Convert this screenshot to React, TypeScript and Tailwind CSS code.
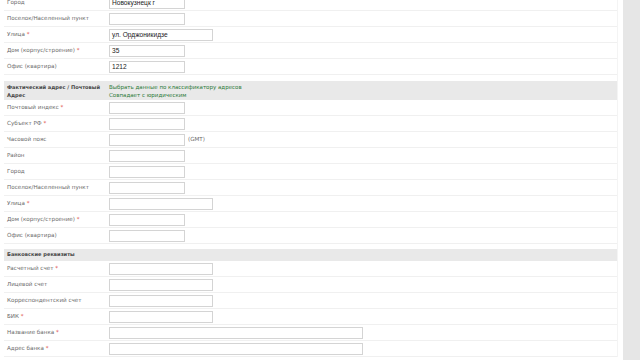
import React from "react";

type Row = { label: string; req?: boolean; w?: "s" | "m" | "l"; value?: string; suffix?: string };

const sec1: Row[] = [
  { label: "Город", value: "Новокузнецк г" },
  { label: "Поселок/Населенный пункт" },
  { label: "Улица", req: true, w: "m", value: "ул. Орджоникидзе" },
  { label: "Дом (корпус/строение)", req: true, value: "35" },
  { label: "Офис (квартира)", value: "1212" },
];

const sec2: Row[] = [
  { label: "Почтовый индекс", req: true },
  { label: "Субъект РФ", req: true },
  { label: "Часовой пояс", suffix: "(GMT)" },
  { label: "Район" },
  { label: "Город" },
  { label: "Поселок/Населенный пункт" },
  { label: "Улица", req: true, w: "m" },
  { label: "Дом (корпус/строение)", req: true },
  { label: "Офис (квартира)" },
];

const sec3: Row[] = [
  { label: "Расчетный счет", req: true, w: "m" },
  { label: "Лицевой счет", w: "m" },
  { label: "Корреспондентский счет", w: "m" },
  { label: "БИК", req: true, w: "m" },
  { label: "Название банка", req: true, w: "l" },
  { label: "Адрес банка", req: true, w: "l" },
];

const lf = { fontFamily: "'DejaVu Sans', Verdana, sans-serif" };

function FormRow({ r }: { r: Row }) {
  const wcls = r.w === "l" ? "w-[254px]" : r.w === "m" ? "w-[104px]" : "w-[76px]";
  return (
    <div className="flex h-[16px] items-center border-b border-[#f0f0f0]">
      <div className="w-[105px] whitespace-nowrap pl-[3px] text-[5.6px] leading-none text-[#6a6a6a]" style={lf}>
        {r.label}
        {r.req && <span className="text-[#d44]"> *</span>}
      </div>
      <div className={`h-[12px] ${wcls} border border-[#d4d4d4] bg-white pl-[2px] text-[6.6px] leading-[10px] text-[#222]`} style={{ fontFamily: "'Liberation Sans', Arial, sans-serif" }}>
        {r.value}
      </div>
      {r.suffix && (
        <span className="ml-[3px] text-[5.6px] text-[#6a6a6a]" style={lf}>
          {r.suffix}
        </span>
      )}
    </div>
  );
}

export default function App() {
  return (
    <div className="flex h-[360px] w-[640px] overflow-hidden bg-white">
      <div className="w-[623px] pl-[4px] pr-[5px]">
        <div className="-mt-[5px] border-r border-[#f4f4f4]">
          {sec1.map((r, i) => (
            <FormRow key={"a" + i} r={r} />
          ))}
          <div className="h-[6px]" />
          <div className="flex h-[19px] items-center bg-[#e9e9e9] leading-[8px]" style={lf}>
            <div className="w-[105px] whitespace-nowrap pl-[3px] text-[5.1px] font-bold text-[#444]">
              Фактический адрес / Почтовый
              <br />
              Адрес
            </div>
            <div className="whitespace-nowrap text-[5.5px] text-[#2d7a3a]">
              Выбрать данные по классификатору адресов
              <br />
              Совпадает с юридическим
            </div>
          </div>
          {sec2.map((r, i) => (
            <FormRow key={"b" + i} r={r} />
          ))}
          <div className="h-[5px]" />
          <div className="flex h-[12px] items-center bg-[#e9e9e9] pl-[3px] text-[5.1px] font-bold text-[#444]" style={lf}>
            Банковские реквизиты
          </div>
          {sec3.map((r, i) => (
            <FormRow key={"c" + i} r={r} />
          ))}
        </div>
      </div>
      <div className="w-[17px] bg-[#e6e6e6]" />
    </div>
  );
}
